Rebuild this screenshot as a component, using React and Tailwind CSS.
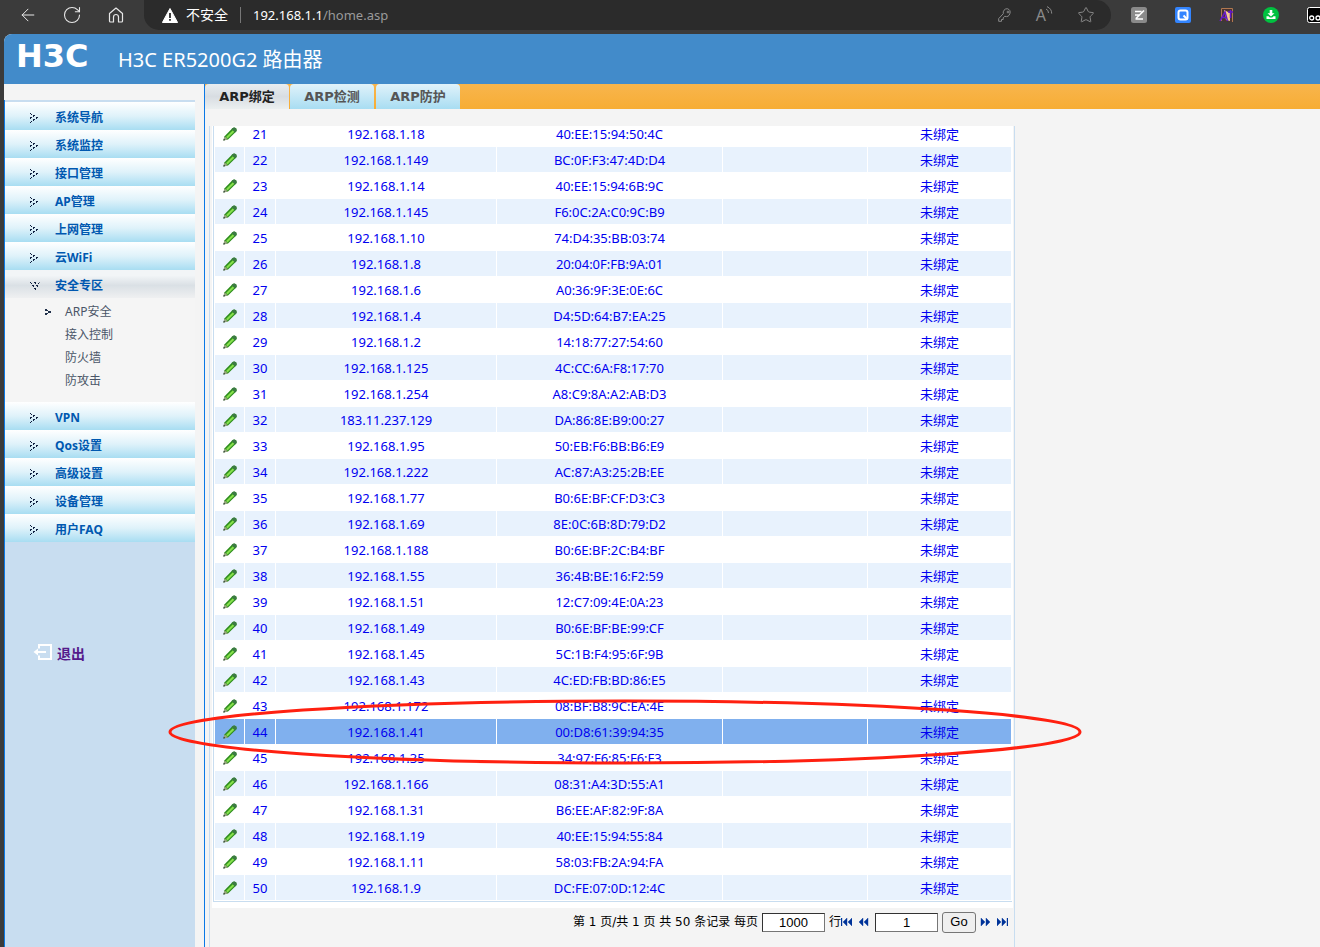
import React, { useState } from 'react';
import { ArrowLeft, RotateCw, Star } from 'lucide-react';

const MENU_TOP = ['系统导航', '系统监控', '接口管理', 'AP管理', '上网管理', '云WiFi'];
const MENU_SUB = ['ARP安全', '接入控制', '防火墙', '防攻击'];
const MENU_BOTTOM = ['VPN', 'Qos设置', '高级设置', '设备管理', '用户FAQ'];
const TABS = ['ARP绑定', 'ARP检测', 'ARP防护'];

const ROWS = [
  [21, '192.168.1.18', '40:EE:15:94:50:4C'],
  [22, '192.168.1.149', 'BC:0F:F3:47:4D:D4'],
  [23, '192.168.1.14', '40:EE:15:94:6B:9C'],
  [24, '192.168.1.145', 'F6:0C:2A:C0:9C:B9'],
  [25, '192.168.1.10', '74:D4:35:BB:03:74'],
  [26, '192.168.1.8', '20:04:0F:FB:9A:01'],
  [27, '192.168.1.6', 'A0:36:9F:3E:0E:6C'],
  [28, '192.168.1.4', 'D4:5D:64:B7:EA:25'],
  [29, '192.168.1.2', '14:18:77:27:54:60'],
  [30, '192.168.1.125', '4C:CC:6A:F8:17:70'],
  [31, '192.168.1.254', 'A8:C9:8A:A2:AB:D3'],
  [32, '183.11.237.129', 'DA:86:8E:B9:00:27'],
  [33, '192.168.1.95', '50:EB:F6:BB:B6:E9'],
  [34, '192.168.1.222', 'AC:87:A3:25:2B:EE'],
  [35, '192.168.1.77', 'B0:6E:BF:CF:D3:C3'],
  [36, '192.168.1.69', '8E:0C:6B:8D:79:D2'],
  [37, '192.168.1.188', 'B0:6E:BF:2C:B4:BF'],
  [38, '192.168.1.55', '36:4B:BE:16:F2:59'],
  [39, '192.168.1.51', '12:C7:09:4E:0A:23'],
  [40, '192.168.1.49', 'B0:6E:BF:BE:99:CF'],
  [41, '192.168.1.45', '5C:1B:F4:95:6F:9B'],
  [42, '192.168.1.43', '4C:ED:FB:BD:86:E5'],
  [43, '192.168.1.172', '08:BF:B8:9C:EA:4E'],
  [44, '192.168.1.41', '00:D8:61:39:94:35'],
  [45, '192.168.1.35', '34:97:F6:85:F6:F3'],
  [46, '192.168.1.166', '08:31:A4:3D:55:A1'],
  [47, '192.168.1.31', 'B6:EE:AF:82:9F:8A'],
  [48, '192.168.1.19', '40:EE:15:94:55:84'],
  [49, '192.168.1.11', '58:03:FB:2A:94:FA'],
  [50, '192.168.1.9', 'DC:FE:07:0D:12:4C'],
];

const App = () => {
  const [selected, setSelected] = useState(44);

  return (
    <div className="relative flex min-h-screen flex-col overflow-hidden bg-[#3b3b3b] font-['Noto_Sans','Noto_Sans_CJK_SC',sans-serif] text-xs">
      <BrowserBar />

      <div className="ml-1 flex flex-1 flex-col rounded-tl-lg bg-[#f4f4f4] overflow-hidden">
        <header className="flex h-[50px] items-center bg-[#428bca] text-white">
          <div className="w-[114px] pb-1.5 pl-3 font-['DejaVu_Sans',sans-serif] text-[32px] leading-8 font-bold">H3C</div>
          <h1 className="pt-0.5 text-xl leading-7">H3C ER5200G2 路由器</h1>
        </header>

        <div className="flex flex-1">
          <Sidebar />

          <main className="min-w-0 flex-1 border-l border-[#0a78e6]">
            <TabBar />
            <section className="ml-1 mt-[17px] w-[806px] border-x border-[#c8ddf0]">
              <div className="ml-0.5 mr-px overflow-hidden bg-white pb-1.5 pl-px">
                <div className="mr-px overflow-hidden border-b border-l border-[#c8ddf0]">
                  {/* list is scrolled, so the first row is partly hidden */}
                  <table className="-mt-1.5 w-full table-fixed border-separate border-spacing-px text-[13px] text-[#0000f0]">
                    <colgroup>
                      <col className="w-[29px]" />
                      <col className="w-[30px]" />
                      <col className="w-[220px]" />
                      <col className="w-[225px]" />
                      <col className="w-[144px]" />
                      <col />
                    </colgroup>
                    <tbody>
                      {ROWS.map(([id, ip, mac]) => (
                        <ArpRow
                          key={id}
                          id={id}
                          ip={ip}
                          mac={mac}
                          active={id === selected}
                          onEdit={() => setSelected(id)}
                        />
                      ))}
                    </tbody>
                  </table>
                </div>
              </div>
              <Pager />
            </section>
          </main>
        </div>
      </div>

      {/* Hand-drawn mark round the selected row */}
      <svg className="pointer-events-none absolute left-[168px] top-[699px]" width="914" height="66" viewBox="0 0 914 66" fill="none">
        <ellipse cx="457" cy="33" rx="455" ry="31" stroke="#ff2010" strokeWidth="3" />
      </svg>
    </div>
  );
};

const BrowserBar = () => (
  <div className="flex h-[34px] items-start text-[#e8e8e8]">
    <div className="flex h-[30px] w-36 items-center gap-6 pl-[18px]">
      <button aria-label="Back"><ArrowLeft size={20} strokeWidth={1.2} /></button>
      <button aria-label="Reload"><RotateCw size={20} strokeWidth={1.3} /></button>
      <button aria-label="Home">
        <svg width="20" height="16" viewBox="0 0 20 16" fill="none" stroke="currentColor" strokeWidth="1.2" strokeLinejoin="round">
          <path d="M3.500 6.500 10 1l6.500 5.500V14q0 1-1 1h-3v-5a2.500 2.500 0 0 0-5 0v5h-3q-1 0-1-1z" />
        </svg>
      </button>
    </div>
    <div className="flex h-[30px] w-[967px] items-center rounded-r-full rounded-bl-full bg-[#2b2b2b] pl-[18px] pr-4">
      <svg width="16" height="15" viewBox="0 0 16 15">
        <path d="M8 .5 15.6 14.5H.4z" fill="#fff" stroke="#fff" strokeLinejoin="round" />
        <path d="M7.1 5h1.8v5H7.1zM7.1 11h1.8v1.8H7.1z" fill="#2b2b2b" />
      </svg>
      <span className="ml-2 text-sm text-white">不安全</span>
      <span className="mx-3 h-4 w-px bg-[#777]" />
      <a href="#url" className="pt-0.5 text-[13px] text-white">192.168.1.1<span className="text-[#9a9a9a]">/home.asp</span></a>
      <div className="ml-auto flex items-center gap-6 text-[#8a8a8a]">
        <button aria-label="Passwords">
          <svg width="14" height="14" viewBox="0 0 14 14" fill="none" stroke="currentColor" strokeLinejoin="round">
            <path d="M9.3.7a4 4 0 0 0-4 5L.7 10.600V13.300H3.500V11.500H5.200V9.800L6.800 8.300A4 4 0 1 0 9.300.7z" />
            <circle cx="10" cy="4" r=".9" />
          </svg>
        </button>
        <button aria-label="Read aloud" className="flex items-start">
          <span className="text-base leading-[18px]">A</span>
          <svg width="7" height="10" viewBox="0 0 7 10" fill="none" stroke="currentColor">
            <path d="M0 3q2.500 1 2.500 4M1 .6q4.700 2 4.700 7" />
          </svg>
        </button>
        <button aria-label="Favorite"><Star size={18} strokeWidth={1.3} /></button>
      </div>
    </div>
    <div className="flex h-[30px] flex-1 items-center gap-7 overflow-hidden pl-5">
      <svg className="shrink-0" width="16" height="16" viewBox="0 0 16 16">
        <rect width="16" height="16" rx="2.500" fill="#8a8a8a" />
        <path d="M4 4.500h6.500M4 8h5M4.500 12H12M5 11.500l8-8" stroke="#fff" strokeWidth="1.600" fill="none" />
      </svg>
      <svg className="shrink-0" width="16" height="16" viewBox="0 0 16 16">
        <rect width="16" height="16" rx="2" fill="#3385ff" />
        <rect x="3.500" y="3.500" width="9" height="9" rx="2" fill="none" stroke="#fff" strokeWidth="2" />
        <path d="m8.500 8.500 4 4" stroke="#fff" strokeWidth="2" />
      </svg>
      <svg className="shrink-0" width="16" height="16" viewBox="0 0 16 16">
        <path d="M2.500 14V1.500h11V15" fill="#4a3430" stroke="#b07850" />
        <path d="M5 3l6 3v8l-4-1z" fill="#f4c890" />
        <path d="M1 14 6 5l2.500 9M3 10.500h5M9 5h5M11.500 3v8" fill="none" stroke="#6418c8" strokeWidth="1.500" />
      </svg>
      <svg className="shrink-0" width="16" height="16" viewBox="0 0 16 16">
        <circle cx="8" cy="8" r="8" fill="#00c140" />
        <path d="M6.700 3h2.600v3.200h2.200L8 9.500 4.500 6.200h2.200zM3.500 9.200h2l1.300 1.300h2.400l1.300-1.300h2V12h-9z" fill="#fff" />
      </svg>
      <svg className="shrink-0" width="16" height="16" viewBox="0 0 16 16">
        <rect x=".5" y=".5" width="15" height="15" rx="2" fill="#000" stroke="#fff" />
        <circle cx="4.700" cy="11" r="2" fill="none" stroke="#fff" strokeWidth="1.300" />
        <circle cx="11" cy="11" r="2" fill="none" stroke="#fff" strokeWidth="1.300" />
      </svg>
    </div>
  </div>
);

const Sidebar = () => (
  <nav className="mr-[9px] mt-4 w-[191px] shrink-0 border-l border-[#0a78e6] bg-[#c8ddf0] pt-0.5">
    {MENU_TOP.map((label) => <MenuItem key={label} label={label} />)}
    <MenuItem label="安全专区" open />
    <ul className="bg-[#f5f5f5] pb-2.5 pt-0.5">
      {MENU_SUB.map((label, i) => (
        <li key={label} className="flex h-[23px] items-center">
          <span className="flex w-[60px] justify-end pr-3.5">
            {i === 0 && (
              <svg width="6" height="6" viewBox="0 0 6 6" fill="#20304a" shapeRendering="crispEdges">
                <path d="M0 0h2v1h1v1H0zM3 2h3v2H3zM0 4h3v1H2v1H0z" />
              </svg>
            )}
          </span>
          <a href="#sub" className="text-[#4a5568]">{label}</a>
        </li>
      ))}
    </ul>
    {MENU_BOTTOM.map((label) => <MenuItem key={label} label={label} />)}
    <a href="#logout" className="ml-7 mt-[102px] flex items-start gap-1 text-sm font-bold text-[#551a8b]">
      <svg width="20" height="16" viewBox="0 0 20 16" fill="none" stroke="#fff" strokeWidth="2">
        <path d="M6 4.500V1h12v14H6v-3.500M13 8H4" />
        <path d="M5 4.500v7L.5 8z" fill="#fff" stroke="none" />
      </svg>
      退出
    </a>
  </nav>
);

const MenuItem = ({ label, open }) => (
  <a
    href="#menu"
    className={`flex h-7 items-center pt-1 font-bold text-[#0058b0] ${
      open
        ? 'bg-linear-to-b from-[#f2f5f7] from-20% via-[#dae0e5] via-55% to-[#eff0f1]'
        : 'bg-linear-to-b from-white via-[#dff2fa] to-[#a8ddf2]'
    }`}
  >
    <span className="w-[50px] pl-[25px]">
      <svg
        className={open ? 'rotate-90' : ''}
        width="9"
        height="10"
        viewBox="0 0 9 10"
        fill="#102040"
        shapeRendering="crispEdges"
      >
        <path d="M0 0h1v1h1v1H1V1H0zM3 2h2v1H4v1H3zM0 4h2v1H1v1H0zM6 4h2v1H7v1H6zM3 6h2v1H4v1H3zM1 8h1v1H1v1H0V9h1z" />
      </svg>
    </span>
    {label}
  </a>
);

const TabBar = () => (
  <div className="flex h-[25px] bg-linear-to-b from-[#f8b54c] to-[#f7ad34] font-['DejaVu_Sans','Noto_Sans_CJK_SC',sans-serif]">
    {TABS.map((tab, i) => (
      <button
        key={tab}
        className={`w-[84px] rounded-t-sm text-[13px] font-bold ${
          i === 0
            ? 'mr-px bg-linear-to-b from-[#e8edf0] via-[#d8dde2] to-[#ebeff0] text-[#222]'
            : 'mr-0.5 bg-linear-to-b from-[#e0f2fa] to-[#a8ddf2] text-[#555]'
        }`}
      >
        {tab}
      </button>
    ))}
  </div>
);

const ArpRow = ({ id, ip, mac, active, onEdit }) => {
  let bg = id % 2 ? 'bg-white' : 'bg-[#e8f2fd]';
  if (active) bg = 'bg-[#80b0ee]';
  return (
    <tr className={`h-[25px] text-center leading-5 [&>td]:p-0 ${bg}`}>
      <td>
        <button className="block w-full pl-2" aria-label={`编辑 ${id}`} onClick={onEdit}>
          <Pencil />
        </button>
      </td>
      <td>{id}</td>
      <td>{ip}</td>
      <td>{mac}</td>
      <td></td>
      <td>未绑定</td>
    </tr>
  );
};

const Pencil = () => (
  <svg width="14" height="14" viewBox="0 0 14 14">
    <path d="M.4 13.600 1.600 9.200 9.600 1q1.700-1.300 3.200.2t.4 3.200L5 12.400z" fill="#2c8c1c" />
    <path d="M3 10 9.800 3.200l1.500 1.500-6.800 6.800z" fill="#86e04c" />
    <path d="M9.600 1q1.700-1.300 3.200.2t.4 3.200l-1.100 1.100L8.600 2z" fill="#3c7a44" />
    <path d="M.4 13.600 1.600 9.200 5 12.400z" fill="#9aa880" />
    <path d="m.4 13.600.5-1.800 1.300 1.200z" fill="#223" />
  </svg>
);

const Pager = () => (
  <form className="flex h-10 items-start justify-end pr-1.5 pt-[3px]" onSubmit={(e) => e.preventDefault()}>
    <div className="flex h-[22px] items-center">
      <label htmlFor="page-size" className="mr-1 font-['DejaVu_Sans','Noto_Sans_CJK_SC',sans-serif]">第 1 页/共 1 页 共 50 条记录 每页</label>
      <PagerInput id="page-size" value="1000" />
      <span className="ml-1">行</span>
      <PagerButton label="首页" d="M0 0h1v8H0zM6 0v8L2 4zM11 0v8L7 4z" />
      <PagerButton label="上一页" className="mx-1.5" d="M5 0v8L1 4zM10 0v8L6 4z" />
      <PagerInput id="page-no" label="页码" value="1" />
      <button className="mx-1 h-[21px] w-[34px] rounded-[3px] border border-[#767676] bg-[#efefef] font-['Liberation_Sans',sans-serif] text-[13px] leading-4">Go</button>
      <PagerButton label="下一页" d="M1 0v8l4-4zM6 0v8l4-4z" />
      <PagerButton label="末页" className="ml-1.5" d="M0 0v8l4-4zM5 0v8l4-4zM10 0h1v8h-1z" />
    </div>
  </form>
);

const PagerInput = ({ id, label, value }) => (
  <input
    id={id}
    aria-label={label}
    defaultValue={value}
    className="h-[19px] w-[63px] border border-[#767676] border-l-[#333] border-t-[#333] bg-white text-center font-['Liberation_Sans',sans-serif] text-[13px]"
  />
);

const PagerButton = ({ label, d, className = '' }) => (
  <button aria-label={label} className={className}>
    <svg width="11" height="8" viewBox="0 0 11 8" fill="#003399" stroke="#003399" strokeWidth=".4"><path d={d} /></svg>
  </button>
);

export default App;
